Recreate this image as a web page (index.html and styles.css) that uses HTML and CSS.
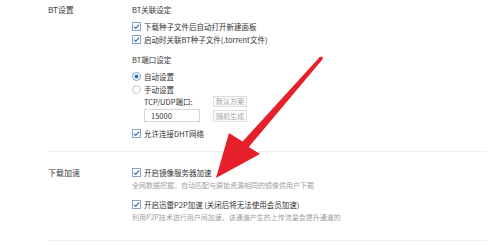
FILE: index.html
```html
<!DOCTYPE html>
<html lang="zh-CN">
<head>
<meta charset="utf-8">
<title>设置</title>
<link rel="stylesheet" href="styles.css">
</head>
<body>
<div class="page">
  <section class="group">
    <div class="label">BT设置</div>
    <div class="content">
      <div class="sub">BT关联设定</div>
      <div class="opt first"><svg class="cb" viewBox="0 0 9 9"><rect x=".5" y=".5" width="8" height="8" fill="#fff" stroke="#86a5c8"/><path d="M2 4.6l1.7 1.7L7.1 2.7" fill="none" stroke="#2f6fb8" stroke-width="1.2"/></svg>下载种子文件后自动打开新建面板</div>
      <div class="opt"><svg class="cb" viewBox="0 0 9 9"><rect x=".5" y=".5" width="8" height="8" fill="#fff" stroke="#86a5c8"/><path d="M2 4.6l1.7 1.7L7.1 2.7" fill="none" stroke="#2f6fb8" stroke-width="1.2"/></svg>启动时关联BT种子文件(.torrent文件)</div>
      <div class="sub second">BT端口设定</div>
      <div class="opt first"><svg class="cb" viewBox="0 0 9 9"><circle cx="4.5" cy="4.5" r="4" fill="#fff" stroke="#7c9fc8"/><circle cx="4.5" cy="4.5" r="2" fill="#2f6fb8"/></svg>自动设置</div>
      <div class="opt"><svg class="cb" viewBox="0 0 9 9"><circle cx="4.5" cy="4.5" r="4" fill="#fff" stroke="#c4c4c4"/></svg>手动设置</div>
      <div class="port">
        <div class="port-label">TCP/UDP端口:</div>
        <div class="btn">默认方案</div>
        <div class="input">15000</div>
        <div class="btn btn2">随机生成</div>
      </div>
      <div class="opt dht"><svg class="cb" viewBox="0 0 9 9"><rect x=".5" y=".5" width="8" height="8" fill="#fff" stroke="#86a5c8"/><path d="M2 4.6l1.7 1.7L7.1 2.7" fill="none" stroke="#2f6fb8" stroke-width="1.2"/></svg>允许连接DHT网络</div>
    </div>
  </section>
  <div class="sep"></div>
  <section class="group">
    <div class="label">下载加速</div>
    <div class="content">
      <div class="opt"><svg class="cb" viewBox="0 0 9 9"><rect x=".5" y=".5" width="8" height="8" fill="#fff" stroke="#86a5c8"/><path d="M2 4.6l1.7 1.7L7.1 2.7" fill="none" stroke="#2f6fb8" stroke-width="1.2"/></svg>开启镜像服务器加速</div>
      <div class="desc">全网数据挖掘，自动匹配与原始资源相同的镜像供用户下载</div>
      <div class="opt p2p"><svg class="cb" viewBox="0 0 9 9"><rect x=".5" y=".5" width="8" height="8" fill="#fff" stroke="#86a5c8"/><path d="M2 4.6l1.7 1.7L7.1 2.7" fill="none" stroke="#2f6fb8" stroke-width="1.2"/></svg>开启迅雷P2P加速 (关闭后将无法使用会员加速)</div>
      <div class="desc">利用P2P技术进行用户间加速，该通道产生的上传流量会提升通道的</div>
    </div>
  </section>
  <div class="sep sep2"></div>
</div>
<svg class="arrow" viewBox="0 0 500 246" width="500" height="246">
  <polygon points="216,178 229,133 242.6,141.6 320,56.8 322.4,59.4 248.8,147 260,154" fill="#e5202a"/>
  <circle cx="321.2" cy="58.1" r="1.6" fill="#e5202a"/>
</svg>
</body>
</html>
```

FILE: styles.css
```css
html, body {
  margin: 0;
  padding: 0;
}
body {
  width: 500px;
  height: 246px;
  overflow: hidden;
  position: relative;
  background: #fff;
  color: #333;
  font-family: "Noto Sans CJK SC", "Noto Sans", sans-serif;
}
.page {
  padding: 3px 13px 0 48px;
}
.group {
  display: grid;
  grid-template-columns: 84px 1fr;
}
.label {
  font-size: 8px;
  line-height: 14px;
  color: #3a3a3a;
}
.sub {
  font-size: 7.5px;
  line-height: 14px;
  color: #333;
}
.sub.second {
  margin-top: 7.5px;
}
.opt {
  display: flex;
  align-items: center;
  gap: 3px;
  height: 13px;
  font-size: 7.5px;
  line-height: 13px;
  color: #333;
  white-space: nowrap;
}
.opt.first {
  margin-top: 2.5px;
}
.opt.dht {
  margin-top: 5.5px;
}
.opt.p2p {
  margin-top: 6px;
}
.cb {
  width: 9px;
  height: 9px;
  flex: none;
  display: block;
}
.port {
  display: grid;
  grid-template-columns: 56px 34px;
  grid-template-rows: 11px 13px;
  column-gap: 13px;
  row-gap: 1.5px;
  padding-left: 12px;
  margin-top: 0.5px;
}
.port-label {
  font-size: 7.5px;
  line-height: 11px;
  color: #333;
  white-space: nowrap;
}
.btn {
  box-sizing: border-box;
  border: 1px solid #dedede;
  background: #fafafa;
  color: #a8a8a8;
  font-size: 7px;
  line-height: 9px;
  text-align: center;
}
.btn2 {
  align-self: end;
  height: 12px;
  line-height: 10px;
}
.input {
  box-sizing: border-box;
  border: 1px solid #d6d6d6;
  background: #fff;
  font-size: 7.5px;
  line-height: 11px;
  padding-left: 6px;
  color: #333;
}
.desc {
  font-size: 7px;
  line-height: 13px;
  color: #a0a0a0;
  white-space: nowrap;
}
.sep {
  height: 1px;
  background: #efefef;
  margin: 11px 0 14px;
}
.sep.sep2 {
  margin: 16px 0 0;
}
.arrow {
  position: absolute;
  left: 0;
  top: 0;
  pointer-events: none;
}
```
